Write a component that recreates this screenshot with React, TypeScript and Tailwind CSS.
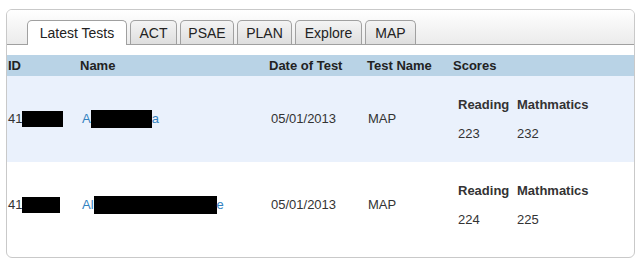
import React from "react";

const tabs = ["Latest Tests", "ACT", "PSAE", "PLAN", "Explore", "MAP"];
const tabW = [100, 47, 54, 55, 67, 51];

function Redact({ w, h }: { w: number; h: number }) {
  return <span className="inline-block bg-black align-middle" style={{ width: w, height: h }} />;
}

function Row({
  bg,
  idBox,
  namePre,
  nameBox,
  nameSuf,
  r,
  m,
}: {
  bg: string;
  idBox: number;
  namePre: string;
  nameBox: number;
  nameSuf: string;
  r: string;
  m: string;
}) {
  return (
    <div className={`flex items-center h-[86px] ${bg}`}>
      <div className="w-[71px] pl-[1px] flex items-center">
        <span>41</span>
        <Redact w={idBox} h={16} />
      </div>
      <div className="w-[189px] pl-[4px] flex items-center text-[#3382bf]">
        <span>{namePre}</span>
        <Redact w={nameBox} h={18} />
        <span>{nameSuf}</span>
      </div>
      <div className="w-[98px] pl-[4px]">05/01/2013</div>
      <div className="w-[86px] pl-[3px]">MAP</div>
      <div className="flex-1 pl-[7px]">
        <div className="grid grid-cols-[59px_auto] gap-y-[10px]">
          <div className="font-bold">Reading</div>
          <div className="font-bold">Mathmatics</div>
          <div>{r}</div>
          <div>{m}</div>
        </div>
      </div>
    </div>
  );
}

export default function App() {
  return (
    <div className="w-[642px] h-[269px] bg-white pt-[9px] pl-[6px]" style={{ fontFamily: '"Liberation Sans", Arial, sans-serif' }}>
      <div className="w-[629px] h-[249px] border border-[#c9c9c9] rounded-[6px] overflow-hidden text-[13px] text-[#333]">
        <div className="h-[35px] bg-gradient-to-b from-white to-[#ebebeb] border-b border-[#a0a0a0] flex items-end pl-[20px] gap-[3px]">
          {tabs.map((t, i) => (
            <div
              key={t}
              style={{ width: tabW[i] }}
              className={
                i === 0
                  ? "h-[25px] mb-[-1px] pt-[1px] bg-white border border-b-0 border-[#a0a0a0] rounded-t-[5px] flex items-center justify-center text-[14px] text-[#222]"
                  : "h-[24px] pt-[1px] bg-gradient-to-b from-[#f4f4f4] to-[#dedede] border border-b-0 border-[#a0a0a0] rounded-t-[5px] flex items-center justify-center text-[14px] text-[#222]"
              }
            >
              {t}
            </div>
          ))}
        </div>
        <div className="h-[10px]" />
        <div className="h-[21px] bg-[#b9d3e6] flex items-center font-bold text-[#222]">
          <div className="w-[71px] pl-[1px]">ID</div>
          <div className="w-[189px] pl-[2px]">Name</div>
          <div className="w-[98px] pl-[2px]">Date of Test</div>
          <div className="w-[86px] pl-[2px]">Test Name</div>
          <div className="flex-1 pl-[2px]">Scores</div>
        </div>
        <Row bg="bg-[#eaf1fc]" idBox={41} namePre="A" nameBox={61} nameSuf="a" r="223" m="232" />
        <Row bg="bg-white" idBox={38} namePre="Al" nameBox={123} nameSuf="e" r="224" m="225" />
      </div>
    </div>
  );
}
